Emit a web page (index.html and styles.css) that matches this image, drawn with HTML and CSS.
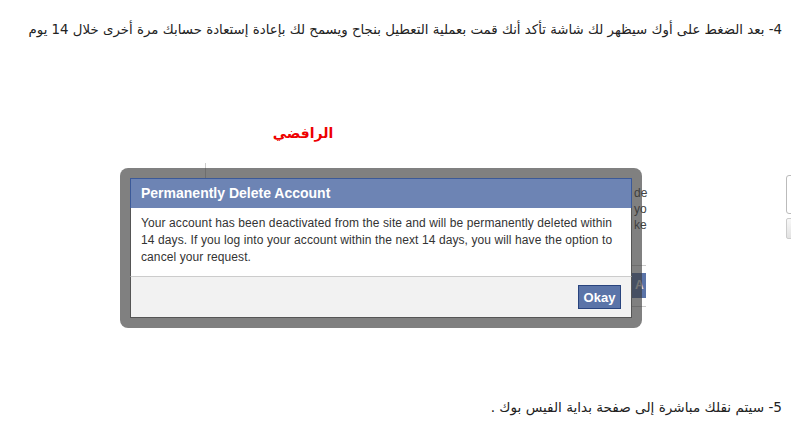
FILE: index.html
```html
<!DOCTYPE html>
<html lang="ar">
<head>
  <meta charset="UTF-8">
  <meta name="viewport" content="width=device-width, initial-scale=1.0">
  <title>تعطيل حساب الفيس بوك</title>
  <link rel="stylesheet" href="styles.css">
</head>
<body>
  <div class="post">
    <p class="step step-first">4- بعد الضغط على أوك سيظهر لك شاشة تأكد أنك قمت بعملية التعطيل بنجاح ويسمح لك بإعادة إستعادة حسابك مرة أخرى خلال 14 يوم</p>

    <div class="shot" dir="ltr">
      <div class="credit" dir="rtl">الرافضي</div>

      <!-- the page behind the dialog -->
      <div class="bg-line"></div>
      <div class="bg-text">de<br>yo<br>ke</div>
      <div class="bg-rule bg-rule-top"></div>
      <div class="bg-btn">A</div>
      <div class="bg-rule bg-rule-bottom"></div>
      <div class="bg-input"></div>
      <div class="bg-button"></div>

      <div class="frame">
        <div class="dialog">
          <div class="dialog-title">Permanently Delete Account</div>
          <div class="dialog-body">
            Your account has been deactivated from the site and will be permanently deleted within<br>
            14 days. If you log into your account within the next 14 days, you will have the option to<br>
            cancel your request.
          </div>
          <div class="dialog-footer">
            <button class="okay">Okay</button>
          </div>
        </div>
      </div>
    </div>

    <p class="step step-last">5- سيتم نقلك مباشرة إلى صفحة بداية الفيس بوك .</p>
  </div>
</body>
</html>
```

FILE: styles.css
```css
body {
  margin: 0;
  background: #fff;
  font-family: "DejaVu Sans", "Liberation Sans", sans-serif;
}
.post {
  width: 791px;
}
.step {
  direction: rtl;
  margin: 20px 0 0;
  padding-right: 9px;
  font-size: 13.6px;
  line-height: 20px;
  color: #222;
  white-space: nowrap;
}
.step-first {
  font-size: 13.35px;
}
.step-last {
  margin-top: 69px;
}
.shot {
  position: relative;
  margin-top: 70px;
  font-family: "Liberation Sans", Arial, sans-serif;
}
.credit {
  width: 100px;
  margin-left: 253px;
  padding-top: 11px;
  line-height: 24px;
  text-align: center;
  font-family: "DejaVu Sans", sans-serif;
  font-weight: bold;
  font-size: 14px;
  color: #e00;
}

/* background page pieces */
.bg-line {
  position: absolute;
  left: 205px;
  top: 53px;
  width: 1px;
  height: 15px;
  background: #ccc;
}
.bg-text {
  position: absolute;
  left: 634px;
  top: 75px;
  font-size: 12px;
  line-height: 16px;
  color: #444;
  white-space: nowrap;
}
.bg-rule {
  position: absolute;
  left: 632px;
  width: 14px;
  height: 1px;
  background: #ccc;
}
.bg-rule-top { top: 155px; }
.bg-rule-bottom { top: 196px; }
.bg-btn {
  position: absolute;
  left: 632px;
  top: 163px;
  width: 14px;
  height: 25px;
  background: #5b74a8;
  color: #ddd;
  font-weight: bold;
  font-size: 12px;
  line-height: 25px;
  padding-left: 3px;
  box-sizing: border-box;
}
.bg-input {
  position: absolute;
  left: 786px;
  top: 65px;
  width: 20px;
  height: 37px;
  border: 1px solid #bbb;
  border-radius: 3px;
}
.bg-button {
  position: absolute;
  left: 786px;
  top: 108px;
  width: 20px;
  height: 19px;
  border: 1px solid #ccc;
  border-radius: 2px;
  background: linear-gradient(#f8f8f8, #e2e2e2);
}

/* dialog */
.frame {
  position: relative;
  width: 522px;
  height: 160px;
  margin: 23px 0 0 120px;
  padding: 10px;
  box-sizing: border-box;
  border-radius: 8px;
  background: rgba(60, 60, 60, 0.65);
}
.dialog {
  height: 140px;
  display: flex;
  flex-direction: column;
}
.dialog-title {
  height: 30px;
  padding-left: 10px;
  box-sizing: border-box;
  border: 1px solid #3b5998;
  border-bottom: none;
  background: #6d84b4;
  color: #fff;
  font-weight: bold;
  font-size: 14px;
  line-height: 29px;
}
.dialog-body {
  padding: 7px 10px 10px;
  background: #fff;
  border-left: 1px solid #555;
  border-right: 1px solid #555;
  font-size: 12px;
  line-height: 17px;
  letter-spacing: 0.1px;
  color: #333;
  white-space: nowrap;
}
.dialog-footer {
  flex: 1;
  display: flex;
  justify-content: flex-end;
  align-items: flex-start;
  padding: 8px 10px 0;
  background: #f2f2f2;
  border: 1px solid #555;
  border-top: 1px solid #ccc;
}
.okay {
  width: 43px;
  height: 24px;
  padding: 0;
  border: 1px solid #29447e;
  background: #5b74a8;
  color: #fff;
  font-family: "Liberation Sans", Arial, sans-serif;
  font-weight: bold;
  font-size: 13px;
}
```
